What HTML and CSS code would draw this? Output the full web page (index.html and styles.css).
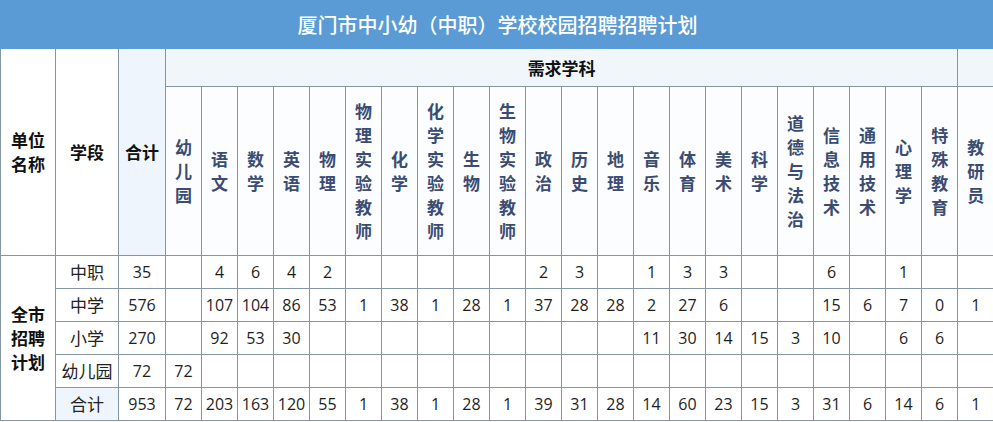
FILE: index.html
```html
<!DOCTYPE html>
<html lang="zh-CN">
<head>
<meta charset="utf-8">
<title>厦门市中小幼（中职）学校校园招聘招聘计划</title>
<link rel="stylesheet" href="styles.css">
</head>
<body>
<div class="title">厦门市中小幼（中职）学校校园招聘招聘计划</div>
<table class="plan">
  <colgroup>
    <col class="c-unit"><col class="c-stage"><col class="c-total">
    <col class="c-s"><col class="c-s"><col class="c-s"><col class="c-s"><col class="c-s"><col class="c-s"><col class="c-s"><col class="c-s"><col class="c-s"><col class="c-s"><col class="c-s"><col class="c-s"><col class="c-s"><col class="c-s"><col class="c-s"><col class="c-s"><col class="c-s"><col class="c-s"><col class="c-s"><col class="c-s"><col class="c-s"><col class="c-s"><col class="c-s">
  </colgroup>
  <thead>
    <tr class="h1">
      <th rowspan="2" class="hd-black"><span class="two">单位名称</span></th>
      <th rowspan="2" class="hd-black">学段</th>
      <th rowspan="2" class="hd-black tint">合计</th>
      <th colspan="22" class="hd-black tint-row">需求学科</th>
      <th class="tint-row"></th>
    </tr>
    <tr class="h2">
      <th class="subj"><span>幼儿园</span></th>
      <th class="subj"><span>语文</span></th>
      <th class="subj"><span>数学</span></th>
      <th class="subj"><span>英语</span></th>
      <th class="subj"><span>物理</span></th>
      <th class="subj"><span>物理实验教师</span></th>
      <th class="subj"><span>化学</span></th>
      <th class="subj"><span>化学实验教师</span></th>
      <th class="subj"><span>生物</span></th>
      <th class="subj"><span>生物实验教师</span></th>
      <th class="subj"><span>政治</span></th>
      <th class="subj"><span>历史</span></th>
      <th class="subj"><span>地理</span></th>
      <th class="subj"><span>音乐</span></th>
      <th class="subj"><span>体育</span></th>
      <th class="subj"><span>美术</span></th>
      <th class="subj"><span>科学</span></th>
      <th class="subj"><span>道德与法治</span></th>
      <th class="subj"><span>信息技术</span></th>
      <th class="subj"><span>通用技术</span></th>
      <th class="subj"><span>心理学</span></th>
      <th class="subj"><span>特殊教育</span></th>
      <th class="subj"><span>教研员</span></th>
    </tr>
  </thead>
  <tbody>
    <tr>
      <th rowspan="5" class="hd-black"><span class="two">全市招聘计划</span></th>
      <td class="lbl">中职</td><td>35</td>
      <td></td><td>4</td><td>6</td><td>4</td><td>2</td><td></td><td></td><td></td><td></td><td></td><td>2</td><td>3</td><td></td><td>1</td><td>3</td><td>3</td><td></td><td></td><td>6</td><td></td><td>1</td><td></td><td></td>
    </tr>
    <tr>
      <td class="lbl">中学</td><td>576</td>
      <td></td><td>107</td><td>104</td><td>86</td><td>53</td><td>1</td><td>38</td><td>1</td><td>28</td><td>1</td><td>37</td><td>28</td><td>28</td><td>2</td><td>27</td><td>6</td><td></td><td></td><td>15</td><td>6</td><td>7</td><td>0</td><td>1</td>
    </tr>
    <tr>
      <td class="lbl">小学</td><td>270</td>
      <td></td><td>92</td><td>53</td><td>30</td><td></td><td></td><td></td><td></td><td></td><td></td><td></td><td></td><td></td><td>11</td><td>30</td><td>14</td><td>15</td><td>3</td><td>10</td><td></td><td>6</td><td>6</td><td></td>
    </tr>
    <tr>
      <td class="lbl">幼儿园</td><td>72</td>
      <td>72</td><td></td><td></td><td></td><td></td><td></td><td></td><td></td><td></td><td></td><td></td><td></td><td></td><td></td><td></td><td></td><td></td><td></td><td></td><td></td><td></td><td></td><td></td>
    </tr>
    <tr>
      <td class="lbl tint">合计</td><td>953</td>
      <td>72</td><td>203</td><td>163</td><td>120</td><td>55</td><td>1</td><td>38</td><td>1</td><td>28</td><td>1</td><td>39</td><td>31</td><td>28</td><td>14</td><td>60</td><td>23</td><td>15</td><td>3</td><td>31</td><td>6</td><td>14</td><td>6</td><td>1</td>
    </tr>
  </tbody>
</table>
</body>
</html>
```

FILE: styles.css
```css
html, body {
  margin: 0;
  padding: 0;
  background: #ffffff;
}

body {
  width: 993px;
  font-family: "Noto Sans CJK SC", "Noto Sans", sans-serif;
  color: #222;
}

.title {
  height: 49px;
  background: #5b9bd5;
  color: #ffffff;
  font-size: 20px;
  font-weight: 500;
  display: flex;
  align-items: center;
  justify-content: center;
  padding-left: 2px;
}

.plan {
  width: 993px;
  border-collapse: collapse;
  table-layout: fixed;
}

.c-unit { width: 55px; }
.c-stage { width: 63px; }
.c-total { width: 47px; }
.c-s { width: 36px; }

.plan th,
.plan td {
  border: 1px solid #8496a3;
  padding: 0;
  text-align: center;
  vertical-align: middle;
}

.plan tr:first-child th { border-top: none; }

.h1 { height: 37px; }
.h2 { height: 169px; }
.plan tbody tr { height: 33px; }

.hd-black {
  font-size: 17px;
  font-weight: 700;
  color: #111;
}

.two {
  display: inline-block;
  width: 2.1em;
  line-height: 24px;
  word-break: break-all;
}

.tint { background: #eef5fc; }
.tint-row { background: #f1f6fb; }

.subj {
  font-size: 17px;
  font-weight: 700;
  color: #3a4c72;
  background: #fcfdfe;
}

.subj span {
  display: inline-block;
  width: 1em;
  line-height: 24px;
  word-break: break-all;
}

.plan td {
  font-family: "Open Sans", "Noto Sans", sans-serif;
  font-size: 16px;
  color: #1e1e1e;
}

.plan td.lbl {
  font-family: "Noto Sans CJK SC", sans-serif;
  font-size: 17px;
  color: #222;
}
```
